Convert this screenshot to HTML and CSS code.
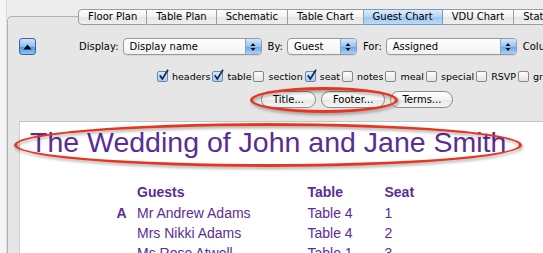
FILE: index.html
```html
<!DOCTYPE html>
<html>
<head>
<meta charset="utf-8">
<title>Guest Chart</title>
<link rel="stylesheet" href="styles.css">
</head>
<body>
<div class="page">
  <div class="edge"></div>
  <div class="window">
    <div class="panel">
      <div class="tabs">
        <span class="tab first">Floor Plan</span>
        <span class="tab">Table Plan</span>
        <span class="tab">Schematic</span>
        <span class="tab">Table Chart</span>
        <span class="tab selected">Guest Chart</span>
        <span class="tab">VDU Chart</span>
        <span class="tab">Statistics</span>
      </div>

      <div class="toolbar">
        <span class="upbtn"><svg width="9" height="6" viewBox="0 0 9 6"><polygon points="0.5,5.5 4.5,0.5 8.5,5.5" fill="#000"/></svg></span>
        <span class="lbl">Display:</span>
        <span class="select sel-display"><span class="val">Display name</span><span class="stepper"><svg width="6" height="10" viewBox="0 0 6 10"><path d="M0.5 4 L3 1 L5.5 4Z M0.5 6 L3 9 L5.5 6Z" fill="#111"/></svg></span></span>
        <span class="lbl">By:</span>
        <span class="select sel-by"><span class="val">Guest</span><span class="stepper"><svg width="6" height="10" viewBox="0 0 6 10"><path d="M0.5 4 L3 1 L5.5 4Z M0.5 6 L3 9 L5.5 6Z" fill="#111"/></svg></span></span>
        <span class="lbl">For:</span>
        <span class="select sel-for"><span class="val">Assigned</span><span class="stepper"><svg width="6" height="10" viewBox="0 0 6 10"><path d="M0.5 4 L3 1 L5.5 4Z M0.5 6 L3 9 L5.5 6Z" fill="#111"/></svg></span></span>
        <span class="lbl">Columns:</span>
      </div>

      <div class="checks">
        <span class="check"><span class="cb on"><svg width="11" height="13" viewBox="0 0 11 13"><path d="M1.8 6.2 L4.3 10 L10 0.8" fill="none" stroke="#17294d" stroke-width="1.7"/></svg></span>headers</span>
        <span class="check"><span class="cb on"><svg width="11" height="13" viewBox="0 0 11 13"><path d="M1.8 6.2 L4.3 10 L10 0.8" fill="none" stroke="#17294d" stroke-width="1.7"/></svg></span>table</span>
        <span class="check"><span class="cb"></span>section</span>
        <span class="check"><span class="cb on"><svg width="11" height="13" viewBox="0 0 11 13"><path d="M1.8 6.2 L4.3 10 L10 0.8" fill="none" stroke="#17294d" stroke-width="1.7"/></svg></span>seat</span>
        <span class="check"><span class="cb"></span>notes</span>
        <span class="check"><span class="cb"></span>meal</span>
        <span class="check"><span class="cb"></span>special</span>
        <span class="check"><span class="cb"></span>RSVP</span>
        <span class="check"><span class="cb"></span>group</span>
      </div>

      <div class="buttons">
        <span class="btn">Title...</span>
        <span class="btn">Footer...</span>
        <span class="btn">Terms...</span>
      </div>

      <div class="content">
        <div class="title">The Wedding of John and Jane Smith</div>
        <div class="chart">
          <span class="h"></span><span class="h">Guests</span><span class="h">Table</span><span class="h">Seat</span>
          <span class="letter">A</span><span>Mr Andrew Adams</span><span>Table 4</span><span>1</span>
          <span></span><span>Mrs Nikki Adams</span><span>Table 4</span><span>2</span>
          <span></span><span>Ms Rose Atwell</span><span>Table 1</span><span>3</span>
        </div>
      </div>
    </div>
  </div>

  <div class="ring ring-buttons"></div>
  <div class="ring ring-title"></div>
</div>
</body>
</html>
```

FILE: styles.css
```css
* { box-sizing: border-box; }
html, body { margin: 0; padding: 0; }
body {
  overflow: hidden;
  background: #ededed;
  font-family: "DejaVu Sans", "Noto Sans", sans-serif;
  font-size: 10px;
  color: #000;
}
.page {
  position: relative;
  display: flex;
  width: 543px;
  height: 253px;
  overflow: hidden;
}
.edge {
  flex: 0 0 7px;
  background: #f5f5f5;
  border-right: 1px dotted #c6c6c6;
}
.window {
  flex: 0 0 auto;
  width: 640px;
  padding-top: 16px;
  background: #ededed;
}
.panel {
  height: 300px;
  background: #e6e6e6;
  border: 1px solid #b2b2b2;
  border-right: none;
  border-radius: 5px 0 0 0;
  padding-left: 11px;
}

/* tabs */
.tabs {
  display: flex;
  margin: -8px 0 0 59px;
  height: 16px;
  white-space: nowrap;
}
.tab {
  height: 16px;
  line-height: 14px;
  padding: 0 9px;
  border: 1px solid #9c9c9c;
  border-left: none;
  background: linear-gradient(#fefefe, #f1f1f1 50%, #e5e5e5 51%, #efefef);
}
.tab.first {
  border-left: 1px solid #9c9c9c;
  border-radius: 4px 0 0 4px;
}
.tab.selected {
  background: linear-gradient(#dcecfc, #b5d5f6 50%, #9cc6f1 51%, #bcdbf8);
  border-color: #7a97bd;
}

/* toolbar */
.toolbar {
  display: flex;
  align-items: center;
  height: 17px;
  margin-top: 13px;
  white-space: nowrap;
}
.upbtn {
  flex: 0 0 17px;
  height: 17px;
  border: 1px solid #3d64a0;
  border-radius: 3px;
  background: linear-gradient(#cfe4fc, #8cbdf2 50%, #4f96e8 51%, #86c4fb);
  display: flex;
  align-items: center;
  justify-content: center;
  margin-right: 43px;
}
.lbl { margin-right: 4px; }
.select {
  display: flex;
  height: 17px;
  border: 1px solid #999;
  border-radius: 4px;
  background: linear-gradient(#ffffff, #f2f2f2);
  overflow: hidden;
  margin-right: 6px;
  box-shadow: 0 1px 0 rgba(0, 0, 0, 0.06);
}
.select .val {
  flex: 1;
  padding-left: 6px;
  line-height: 15px;
}
.stepper {
  flex: 0 0 16px;
  border-left: 1px solid #8ba6c8;
  background: linear-gradient(#d4e7fb, #97c3f1 50%, #66a6ea 51%, #a9d1f8);
  display: flex;
  align-items: center;
  justify-content: center;
}
.sel-display { width: 139px; }
.sel-by { width: 70px; }
.sel-for { width: 131px; }

/* checkboxes */
.checks {
  display: flex;
  align-items: center;
  height: 13px;
  margin: 15px 0 0 138px;
  font-size: 9.5px;
  white-space: nowrap;
}
.check {
  display: flex;
  align-items: center;
}
.check + .check { margin-left: 2px; }
.cb {
  position: relative;
  flex: 0 0 11px;
  height: 11px;
  border: 1px solid #878787;
  border-radius: 2px;
  background: linear-gradient(#fcfcfc, #e4e4e4);
  margin-right: 4px;
}
.cb.on {
  background: linear-gradient(#d6e8fa, #a9cdf2);
  border-color: #6d88aa;
}
.cb svg {
  position: absolute;
  left: 0;
  top: -3px;
}

/* buttons */
.buttons {
  display: flex;
  gap: 5px;
  height: 17px;
  margin: 8px 0 0 242px;
}
.btn {
  height: 17px;
  padding: 0 11px;
  border: 1px solid #8a8a8a;
  border-radius: 9px;
  background: linear-gradient(#ffffff, #f3f3f3 50%, #e6e6e6 51%, #f6f6f6);
  line-height: 15px;
}

/* content */
.content {
  margin-top: 13px;
  height: 200px;
  background: #fff;
  border-top: 1px solid #c2c2c2;
  border-left: 1px solid #cdcdcd;
  padding: 4px 0 0 10px;
  color: #5a2d96;
  font-family: "Liberation Sans", Arial, sans-serif;
}
.title {
  font-size: 28.5px;
  line-height: 32px;
  white-space: nowrap;
}
.chart {
  display: grid;
  grid-template-columns: 20.5px 170.5px 77px 40px;
  margin: 24px 0 0 86.5px;
  font-size: 14px;
  line-height: 20px;
  white-space: nowrap;
}
.chart .h {
  font-weight: bold;
  margin-bottom: 1px;
}
.chart .letter { font-weight: bold; }

/* annotation ellipses */
.ring {
  position: absolute;
  border: 3px solid #e8361e;
  border-radius: 50%;
  filter: drop-shadow(1px 2px 1.5px rgba(0, 0, 0, 0.35));
}
.ring-buttons {
  left: 250px;
  top: 87px;
  width: 148px;
  height: 26px;
}
.ring-title {
  left: 14px;
  top: 123px;
  width: 508px;
  height: 44px;
}
```
